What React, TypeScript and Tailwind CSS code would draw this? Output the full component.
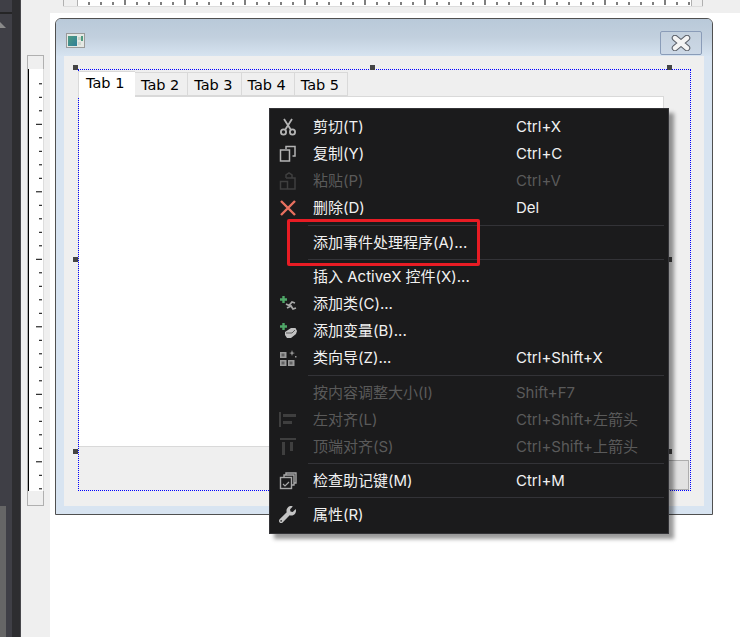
import { FaWrench } from 'react-icons/fa';

const topTicks = Array.from({ length: 51 }, (_, i) => 88.5 - 78 + i * 12);
const sideTicks = Array.from({ length: 33 }, (_, i) => 83.3 - 69 + i * 13.5);

const Scissors = () => (
  <svg width="18" height="18" viewBox="0 0 18 18" fill="none" stroke="#b4b4b4" strokeWidth="1.8">
    <circle cx="4.5" cy="14" r="2.6" />
    <circle cx="13.5" cy="14" r="2.6" />
    <path d="M6 12 L13 1 M12 12 L5 1" />
  </svg>
);

const Copy = () => (
  <svg width="18" height="18" viewBox="0 0 18 18" fill="none" stroke="#b4b4b4" strokeWidth="1.5">
    <path d="M7 4V1.5h9V11h-2.5" />
    <rect x="1.5" y="5" width="9" height="11" />
  </svg>
);

const Paste = () => (
  <svg width="18" height="18" viewBox="0 0 18 18" fill="none" stroke="#3f3f3f" strokeWidth="1.5">
    <path d="M7 6V3l3-2 3 2v3M7 6h9v11H9M1.5 9.5H8.5V17H1.5Z" />
  </svg>
);

const Delete = () => (
  <svg width="18" height="18" viewBox="0 0 18 18" fill="none" stroke="#e8705f" strokeWidth="2.4">
    <path d="M2 2 L16 16 M16 2 L2 16" />
  </svg>
);

const Plus = () => <path d="M4.5 1v7M1 4.5h7" stroke="#4fa868" strokeWidth="2.4" fill="none" />;

const AddClass = () => (
  <svg width="19" height="18" viewBox="0 0 19 18" fill="none">
    <Plus />
    <path d="M7 9l3 1.5 3-3.5 3 1M8 13l4-2 2 3 3-1" stroke="#a8a8a8" strokeWidth="1.8" />
  </svg>
);

const AddVariable = () => (
  <svg width="19" height="18" viewBox="0 0 19 18" fill="none">
    <Plus />
    <path d="M6 10l6-4h4.5l1.5 3-1 3-5 4H8l-2-3Z" fill="#c2c2c2" />
    <path d="M7 11h6l3-3" stroke="#5a5a5a" strokeWidth="1" />
  </svg>
);

const ClassWizard = () => (
  <svg width="18" height="18" viewBox="0 0 18 18" fill="#9a9a9a">
    <rect x="1" y="3" width="6.5" height="6" />
    <rect x="1" y="11" width="6.5" height="6" />
    <rect x="9" y="11" width="6.5" height="6" />
    <path d="M13 1l.8 2.4L16 4l-2.2.7L13 7l-.8-2.3L10 4l2.2-.6Z" />
    <rect x="16" y="7" width="1.5" height="1.5" />
    <path d="M2.5 4.5h3v3h-3zM2.5 12.5h3v3h-3zM10.5 12.5h3v3h-3z" fill="#1b1b1c" opacity="0.45" />
  </svg>
);

const AlignLeft = () => (
  <svg width="18" height="18" viewBox="0 0 18 18" fill="#3f3f3f">
    <rect x="0" y="1" width="2" height="15" />
    <rect x="4" y="3" width="13" height="3" />
    <rect x="4" y="10" width="9" height="3" />
  </svg>
);

const AlignTop = () => (
  <svg width="18" height="18" viewBox="0 0 18 18" fill="#3f3f3f">
    <rect x="1" y="0" width="16" height="2" />
    <rect x="3" y="4" width="3" height="13" />
    <rect x="11" y="4" width="3" height="9" />
  </svg>
);

const Mnemonics = () => (
  <svg width="18" height="18" viewBox="0 0 18 18" fill="none" stroke="#a8a8a8" strokeWidth="1.4">
    <path d="M7 3V1h10v10h-2M5 5V3h10v10h-2" />
    <rect x="1.5" y="5.5" width="11" height="11" />
    <path d="M4 12l2 2 4-4" strokeWidth="1.2" />
  </svg>
);

const items = [
  { label: '剪切(T)', shortcut: 'Ctrl+X', icon: <Scissors /> },
  { label: '复制(Y)', shortcut: 'Ctrl+C', icon: <Copy /> },
  { label: '粘贴(P)', shortcut: 'Ctrl+V', icon: <Paste />, disabled: true },
  { label: '删除(D)', shortcut: 'Del', icon: <Delete /> },
  { separator: true, h: 'h-[8px]' },
  { label: '添加事件处理程序(A)...' },
  { separator: true, h: 'h-[7px]' },
  { label: '插入 ActiveX 控件(X)...' },
  { label: '添加类(C)...', icon: <AddClass /> },
  { label: '添加变量(B)...', icon: <AddVariable /> },
  { label: '类向导(Z)...', shortcut: 'Ctrl+Shift+X', icon: <ClassWizard /> },
  { separator: true, h: 'h-[8px]' },
  { label: '按内容调整大小(I)', shortcut: 'Shift+F7', disabled: true },
  { label: '左对齐(L)', shortcut: 'Ctrl+Shift+左箭头', icon: <AlignLeft />, disabled: true },
  { label: '顶端对齐(S)', shortcut: 'Ctrl+Shift+上箭头', icon: <AlignTop />, disabled: true },
  { separator: true, h: 'h-[7px]' },
  { label: '检查助记键(M)', shortcut: 'Ctrl+M', icon: <Mnemonics /> },
  { separator: true, h: 'h-[7px]' },
  { label: '属性(R)', icon: <FaWrench size={17} color="#c4c4c4" /> },
];

const handles = [
  'left-[9px] top-[9px]',
  'left-[306px] top-[9px]',
  'left-[603px] top-[9px]',
  'left-[9px] top-[201px]',
  'left-[603px] top-[201px]',
  'left-[9px] top-[393px]',
  'left-[603px] top-[393px]',
];

const App = () => {
  return (
    <div className="relative flex h-[637px] w-[740px] overflow-hidden bg-white font-['Inter','Noto_Sans_CJK_SC',sans-serif]">
      {/* tool window strip */}
      <div className="flex w-[21px] border-r border-[#47474b] bg-[#2d2d30]">
        <div className="flex h-full w-[12px] flex-col bg-[#3f3f46]">
          <div className="mt-[12px] h-[2px] bg-[#252526]" />
          <div className="mt-[8px] h-0 w-0 border-b-[6px] border-r-[6px] border-b-[#8a8a8a] border-r-transparent" />
          <div className="mt-auto h-[131px] w-[6px] bg-[#666666]" />
        </div>
      </div>

      {/* vertical ruler */}
      <div className="w-[29px] bg-[#efefef] pl-[6px] pt-[55px]">
        <div className="h-[14px] w-[17px] border-x border-t border-[#b0b0b0] bg-[#efefef]" />
        <div className="h-[422px] w-[17px] overflow-hidden border-x border-[#b0b0b0] border-r-[#dddddd] bg-white">
          <div className="h-full w-[15px] border-l border-black">
            <svg width="14" height="422">
              {sideTicks.map((y, i) => (
                <rect key={y} x={i % 5 === 3 ? 7 : 10} y={y} width={i % 5 === 3 ? 6 : 3} height="1" fill="#000" />
              ))}
            </svg>
          </div>
        </div>
        <div className="h-[15px] w-[17px] border-x border-b border-[#b0b0b0] bg-[#efefef]" />
      </div>

      {/* design surface */}
      <div className="flex-1">
        <div className="h-[13px] bg-[#efefef] pl-[13px]">
          <div className="flex h-[7px] w-[640px] border-b border-[#dddddd]">
            <div className="w-[15px] border-x border-[#b0b0b0] bg-[#efefef]" />
            <svg width="613" height="6" className="bg-white">
              {topTicks.map((x, i) => (
                <rect key={x} x={x} y={i % 5 === 3 ? 0 : 2} width="1" height={i % 5 === 3 ? 5 : 3} fill="#000" />
              ))}
            </svg>
            <div className="w-[12px] border-x border-[#b0b0b0] bg-[#efefef]" />
          </div>
        </div>

        <div className="pl-[5px] pt-[5px]">
          {/* dialog being edited */}
          <div className="flex h-[497px] w-[658px] flex-col rounded-t-[6px] border border-[#505050] bg-[#d8e4f1]">
            <div className="flex h-[37px] items-center justify-between rounded-t-[5px] bg-gradient-to-b from-[#b9c9d9] via-[#c2d0de] to-[#d6e3f0] pl-[10px] pr-[10px]">
              <svg width="19" height="15" viewBox="0 0 19 15" className="mt-[6px]">
                <defs>
                  <linearGradient id="ico" x1="0" y1="0" x2="1" y2="1">
                    <stop offset="0" stopColor="#4f9a80" />
                    <stop offset="1" stopColor="#2f7f9a" />
                  </linearGradient>
                </defs>
                <rect x="0.5" y="0.5" width="18" height="14" fill="#e4e8e4" stroke="#9a9a9a" />
                <rect x="2" y="3" width="9" height="10" fill="url(#ico)" />
                <rect x="12" y="4" width="5" height="3" fill="#c8d4c8" />
                <rect x="15" y="3" width="2" height="5" fill="#4f9a80" />
                <rect x="12" y="9" width="3" height="3" fill="#cfd6cf" />
              </svg>
              <div className="mt-[10px] flex h-[24px] w-[42px] items-center justify-center rounded-[2px] border border-[#8a9cb8] bg-gradient-to-b from-[#c3d0dd] to-[#ccd8e6]">
                <svg width="20" height="16" viewBox="0 0 20 16">
                  <path d="M4 3 L16 13 M16 3 L4 13" stroke="#5a5f68" strokeWidth="6.5" strokeLinecap="round" />
                  <path d="M4 3 L16 13 M16 3 L4 13" stroke="#f4f4f4" strokeWidth="4.4" strokeLinecap="round" />
                </svg>
              </div>
            </div>

            <div className="relative mx-[8px] flex h-[450px] w-[640px] flex-col bg-[#efefef] pl-[14px] pr-[15px] pt-[15px]">
              {/* tab strip */}
              <div className="flex h-[25px] items-start font-['DejaVu_Sans',sans-serif] text-[14.5px] leading-[23px] text-black">
                <div className="z-10 h-[26px] w-[57px] border-l border-t border-[#d9d9d9] bg-white pl-[7px]">Tab 1</div>
                {['Tab 2', 'Tab 3', 'Tab 4', 'Tab 5'].map((tab) => (
                  <div key={tab} className="mt-[1px] flex h-[24px] w-[53.25px] justify-center border-r border-t border-b border-[#d9d9d9] bg-[#efefef] pr-[2px] pt-[1px]">
                    {tab}
                  </div>
                ))}
              </div>
              <div className="h-[351px] w-[586px] border border-[#d9d9d9] bg-white" />
              <div className="mt-[13px] h-[30px] w-[75px] self-end border border-[#adadad] bg-[#e1e1e1]" />

              {/* selection */}
              <div className="absolute left-[14px] top-[13px] h-[422px] w-[613px] border border-dotted border-[#0000ff]" />
              {handles.map((pos) => (
                <div key={pos} className={`absolute h-[5px] w-[5px] bg-[#444444] ${pos}`} />
              ))}
            </div>
          </div>
        </div>
      </div>

      {/* context menu */}
      <div className="absolute left-[269px] top-[108px] w-[400px] border border-[#333337] bg-[#1b1b1c] pb-[5px] pt-[4px] text-[15px] text-[#f1f1f1] shadow-[5px_5px_4px_rgba(0,0,0,0.4)]">
        {items.map((item, i) =>
          item.separator ? (
            <div key={i} className={`flex items-center pl-[38px] pr-[4px] ${item.h}`}>
              <div className="h-px w-full bg-[#333337]" />
            </div>
          ) : (
            <div key={i} className={`flex h-[27px] items-center ${item.disabled ? 'text-[#5a5a5a]' : ''}`}>
              <div className="flex w-[43px] items-center pl-[9px]">{item.icon}</div>
              <div className="w-[203px] whitespace-nowrap pt-[2px]">{item.label}</div>
              <div className="whitespace-nowrap pt-[2px]">{item.shortcut}</div>
            </div>
          )
        )}
        <div className="absolute left-[17px] top-[110px] h-[47px] w-[193px] rounded-[2px] border-[3px] border-[#e81c24]" />
      </div>
    </div>
  );
};

export default App;
